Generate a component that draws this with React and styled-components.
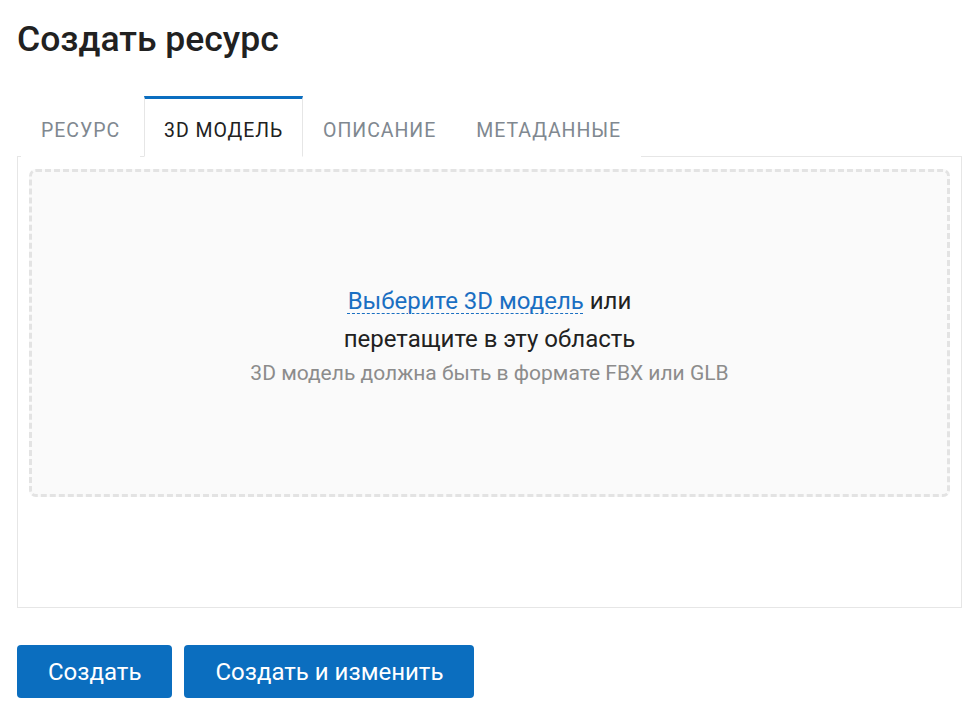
import React, { useState } from "react";
import styled, { createGlobalStyle } from "styled-components";

const GlobalStyle = createGlobalStyle`
  html, body {
    margin: 0;
    padding: 0;
    background: #ffffff;
    font-family: Roboto, "Noto Sans", "Liberation Sans", sans-serif;
    color: #212121;
  }
  * { box-sizing: border-box; }
`;

const Page = styled.div`
  padding: 17px 15px 0 17px;
`;

const Title = styled.h1`
  margin: 0;
  font-size: 35.5px;
  font-weight: 500;
  line-height: 44px;
  color: #212121;
`;

const Tabs = styled.div`
  display: flex;
  margin-top: 35px;
  padding-left: 4px;
  position: relative;
  z-index: 1;
  margin-bottom: -1px;
`;

const Tab = styled.button`
  height: 61px;
  padding: 6px 19px 0;
  margin-right: ${(p) => (p.first ? 4 : 0)}px;
  border: 1px solid ${(p) => (p.active ? "#e6e6e6" : "transparent")};
  border-top: 3px solid ${(p) => (p.active ? "#0b6ec0" : "transparent")};
  border-bottom: 1px solid ${(p) => (p.active ? "#ffffff" : "transparent")};
  background: #ffffff;
  font-family: inherit;
  font-size: 19.5px;
  letter-spacing: 0.95px;
  text-transform: uppercase;
  color: ${(p) => (p.active ? "#212121" : "#808890")};
  cursor: pointer;
`;

const Panel = styled.div`
  border: 1px solid #e6e6e6;
  height: 452px;
  padding: 12px 11px;
`;

const DropZone = styled.div`
  height: 328px;
  border: 3px dashed #e3e3e3;
  border-radius: 7px;
  background: #fafafa;
  display: flex;
  flex-direction: column;
  align-items: center;
  justify-content: center;
`;

const MainLine = styled.div`
  font-size: 24px;
  line-height: 38px;
  color: #212121;
  text-align: center;
`;

const PickLink = styled.a`
  color: #1a6fc2;
  text-decoration: underline dashed;
  text-underline-offset: 4px;
  text-decoration-thickness: 1px;
  cursor: pointer;
`;

const Hint = styled.div`
  margin-top: 3px;
  font-size: 21px;
  color: #8c8c8c;
`;

const Actions = styled.div`
  display: flex;
  gap: 12px;
  margin-top: 37px;
`;

const Button = styled.button`
  height: 53px;
  padding: 0 31px;
  border: none;
  border-radius: 4px;
  background: #0b6ebf;
  color: #ffffff;
  font-family: inherit;
  font-size: 24px;
  cursor: pointer;
`;

const tabs = ["Ресурс", "3D модель", "Описание", "Метаданные"];

export default function App() {
  const [active, setActive] = useState(1);
  return (
    <Page>
      <GlobalStyle />
      <Title>Создать ресурс</Title>
      <Tabs>
        {tabs.map((t, i) => (
          <Tab
            key={t}
            first={i === 0}
            active={i === active}
            onClick={() => setActive(i)}
          >
            {t}
          </Tab>
        ))}
      </Tabs>
      <Panel>
        <DropZone>
          <MainLine>
            <PickLink>Выберите 3D модель</PickLink> или
          </MainLine>
          <MainLine>перетащите в эту область</MainLine>
          <Hint>3D модель должна быть в формате FBX или GLB</Hint>
        </DropZone>
      </Panel>
      <Actions>
        <Button>Создать</Button>
        <Button>Создать и изменить</Button>
      </Actions>
    </Page>
  );
}
